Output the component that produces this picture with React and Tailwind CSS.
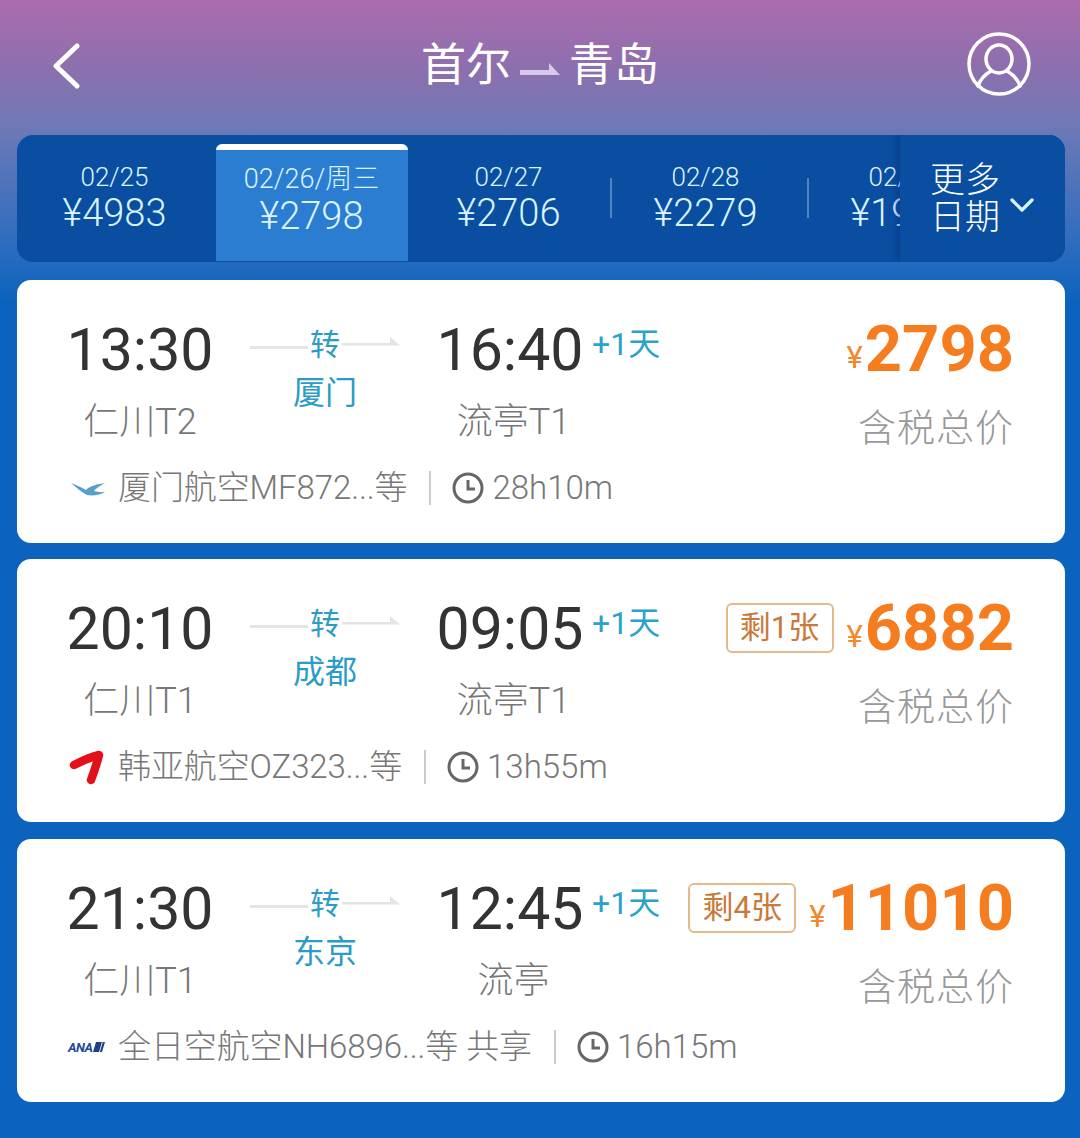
import React from 'react';
import { ChevronDown } from 'lucide-react';

const FONT = "font-['Roboto','Noto_Sans_CJK_SC',sans-serif]";

const dates = [
  { date: '02/25', price: '¥4983', first: true },
  { date: '02/26/周三', price: '¥2798', active: true },
  { date: '02/27', price: '¥2706' },
  { date: '02/28', price: '¥2279', divider: true },
  { date: '02/29', price: '¥1988', divider: true },
];

const XiamenLogo = () => (
  <svg width="38" height="20" viewBox="0 0 38 20" className="shrink-0">
    <path d="M3 5 C9 7 14 10 18 12 C22 8 29 6 37 5 C32 8 28 10 26 13 C29 14 33 14 37 14 C32 17 25 18 19 17 C13 14 8 9 3 5Z" fill="#5a9fcb" />
  </svg>
);

const AsianaLogo = () => (
  <svg width="38" height="36" viewBox="0 0 38 36" fill="none" stroke="#e3101a" strokeWidth="8.5" strokeLinecap="round" strokeLinejoin="round" className="shrink-0">
    <path d="M6 16 C14 12 22 8 31 6 C29 14 26 23 23 31" />
  </svg>
);

const AnaLogo = () => (
  <div className="flex w-[38px] shrink-0 items-center gap-[1px]">
    <span className="text-[13px] leading-none font-bold italic tracking-[-0.5px] text-[#1f4a9c]">ANA</span>
    <svg width="12" height="10" viewBox="0 0 12 10">
      <path d="M3 0H12L9 10H0Z" fill="#1f3f86" />
      <path d="M9 0H9.8L6.8 10H6Z" fill="#fff" />
    </svg>
  </div>
);

const ClockIcon = () => (
  <svg width="32" height="32" viewBox="0 0 32 32" fill="none" stroke="#666" strokeWidth="3" className="shrink-0">
    <circle cx="16" cy="16" r="14" />
    <path d="M16 8V17H23" />
  </svg>
);

const UserIcon = () => (
  <svg width="64" height="64" viewBox="0 0 64 64" fill="none" stroke="#fff" strokeWidth="3.5" strokeLinecap="round">
    <circle cx="32" cy="32" r="30" />
    <ellipse cx="32" cy="27" rx="13" ry="14" />
    <path d="M24 39 C17 43 13 48 11 54" />
    <path d="M40 39 C47 43 51 48 53 54" />
  </svg>
);

const flights = [
  { dep: '13:30', depAp: '仁川T2', via: '厦门', arr: '16:40', arrAp: '流亭T1', price: '2798', airline: '厦门航空MF872...等', logo: <XiamenLogo />, dur: '28h10m' },
  { dep: '20:10', depAp: '仁川T1', via: '成都', arr: '09:05', arrAp: '流亭T1', price: '6882', left: '剩1张', airline: '韩亚航空OZ323...等', logo: <AsianaLogo />, dur: '13h55m' },
  { dep: '21:30', depAp: '仁川T1', via: '东京', arr: '12:45', arrAp: '流亭', price: '11010', left: '剩4张', airline: '全日空航空NH6896...等 共享', logo: <AnaLogo />, dur: '16h15m' },
];

function FlightCard({ f }) {
  return (
    <div className="rounded-[14px] bg-white pt-[34px] pr-[51px] pb-[35px] pl-[43px] last:mt-[1px]">
      <div className="flex">
        <div className="flex w-[160px] flex-col items-center">
          <div className="h-[70px] text-[59px] leading-[72px] text-[#333]">{f.dep}</div>
          <div className="mt-[20px] h-[36px] text-[36px] leading-[36px] font-light text-[#777]">{f.depAp}</div>
        </div>
        <div className="ml-[30px] w-[150px] pt-[8px] text-[#2b9cc4]">
          <div className="flex items-center">
            <div className="mt-[4px] h-[3px] w-[58px] bg-[#e4e4e4]" />
            <span className="w-[34px] text-center text-[30px] leading-[46px]">转</span>
            <svg width="58" height="14" viewBox="0 0 58 14" className="mt-[-3px]">
              <path d="M0 8.5H58L48 0V6H0Z" fill="#e4e4e4" />
            </svg>
          </div>
          <div className="mt-[2px] text-center text-[32px] leading-[46px]">{f.via}</div>
        </div>
        <div className="ml-[30px] flex w-[160px] flex-col items-center">
          <div className="h-[70px] text-[59px] leading-[72px] text-[#333]">{f.arr}</div>
          <div className="mt-[20px] ml-[7px] h-[36px] text-[36px] leading-[36px] font-light text-[#777]">{f.arrAp}</div>
        </div>
        <div className="ml-[2px] h-[60px] text-[32px] leading-[60px] text-[#2ba3c9]">+1天</div>
        <div className="flex flex-1 flex-col items-end">
          <div className="flex h-[70px] items-center">
            {f.left && (
              <div className="mr-[13px] flex h-[50px] w-[108px] items-center justify-center rounded-[6px] border-2 border-[#e6b98c] text-[31px] text-[#c9793a]">
                {f.left}
              </div>
            )}
            <span className="mt-[16px] mr-[2px] text-[31px] leading-none text-[#f08a2c]">¥</span>
            <span className="text-[65px] leading-none font-bold text-[#f57c1f]">{f.price}</span>
          </div>
          <div className="mt-[20px] text-[38px] leading-[48px] font-light tracking-[1px] text-[#999]">含税总价</div>
        </div>
      </div>
      <div className="mt-[16px] ml-[8px] flex h-[40px] items-center text-[33px] font-light text-[#777]">
        {f.logo}
        <span className="ml-[12px] tracking-[-0.1px]">{f.airline}</span>
        <div className="mr-[21px] ml-[22px] h-[34px] w-[2px] bg-[#ccc]" />
        <ClockIcon />
        <span className="ml-[8px]">{f.dur}</span>
      </div>
    </div>
  );
}

export default function App() {
  return (
    <div className={`${FONT} min-h-[1138px] bg-[linear-gradient(180deg,#ab6cae_0px,#8c6fae_70px,#6f79b6_125px,#2a6cc0_250px,#0c63bd_300px,#0c63bd_100%)] pr-[15px] pb-[36px] pl-[17px]`}>
      <div className="relative flex h-[135px] items-center justify-between pb-[4px]">
        <svg width="28" height="46" viewBox="0 0 28 46" fill="none" stroke="#fff" strokeWidth="5" strokeLinecap="round" strokeLinejoin="round" className="ml-[35px]">
          <path d="M25 3 L4 23 L25 43" />
        </svg>
        <div className="absolute inset-x-0 flex items-center justify-center pr-[2px] text-[45px] text-white">
          <span>首尔</span>
          <svg width="40" height="14" viewBox="0 0 40 14" className="mx-[9px] mt-[8px]">
            <path d="M0 7H29V0L40 12H0Z" fill="#d8c9ea" />
          </svg>
          <span>青岛</span>
        </div>
        <div className="mt-[-3px] mr-[34px]">
          <UserIcon />
        </div>
      </div>

      <div className="relative flex h-[127px] overflow-hidden rounded-[16px] bg-[#0a4ea2] text-[#d9f3ff]">
        {dates.map((d) => (
          <div key={d.date} className={`relative flex w-[197px] shrink-0 justify-center ${d.first ? 'ml-[-1px]' : ''}`}>
            {d.divider && <div className="absolute top-[43px] left-[3px] h-[40px] w-[2px] bg-[#4f86c2]" />}
            {d.active ? (
              <div className="mt-[9px] flex h-[117px] w-[192px] flex-col items-center rounded-t-[6px] border-t-[6px] border-white bg-[#2b7dd2]">
                <span className="mt-[13px] text-[27px] leading-[32px] font-light">{d.date}</span>
                <span className="mt-[-1px] text-[38px] leading-[44px] font-light">{d.price}</span>
              </div>
            ) : (
              <div className="flex flex-col items-center pt-[26px]">
                <span className="text-[26px] leading-[32px] font-light">{d.date}</span>
                <span className="mt-[-2px] text-[38px] leading-[44px] font-light">{d.price}</span>
              </div>
            )}
          </div>
        ))}
        <div className="absolute top-0 right-0 bottom-0 flex w-[165px] items-center bg-[#0a4ea2] pl-[30px] shadow-[-4px_0_6px_rgba(0,40,110,0.35)]">
          <div className="mt-[1px] text-[35px] leading-[37px] font-light text-white">
            更多
            <br />
            日期
          </div>
          <ChevronDown size={40} strokeWidth={2} className="mt-[12px] ml-[2px] text-[#d9f3ff]" />
        </div>
      </div>

      <div className="mt-[18px] flex flex-col gap-[16px]">
        {flights.map((f) => (
          <FlightCard key={f.dep} f={f} />
        ))}
      </div>
    </div>
  );
}
